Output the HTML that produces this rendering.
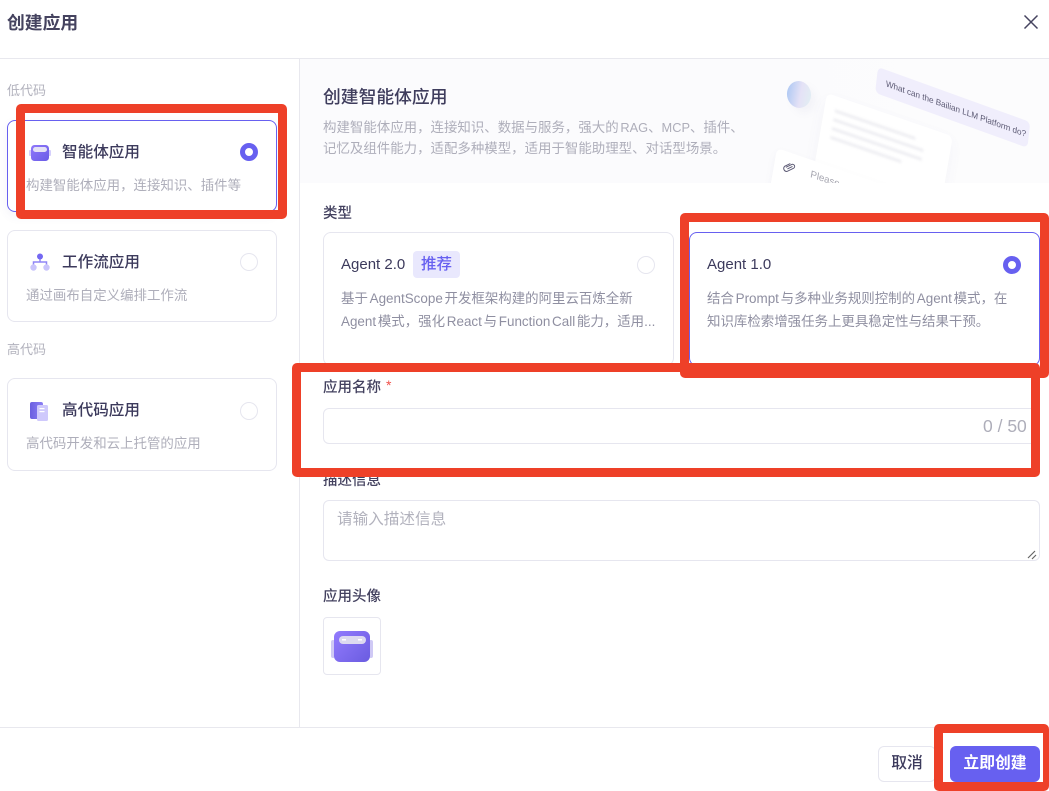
<!DOCTYPE html>
<html lang="zh-CN">
<head>
<meta charset="utf-8">
<title>创建应用</title>
<style>
html,body{margin:0;padding:0;background:#fff;}
body{width:1049px;height:791px;position:relative;overflow:hidden;font-family:"Liberation Sans","Noto Sans CJK SC",sans-serif;color:#3c3a5c;}
.a{position:absolute;box-sizing:border-box;white-space:nowrap;}
.card{position:absolute;box-sizing:border-box;background:#fff;border:1px solid #e6e6ef;border-radius:8px;}
.sel{border-color:#6760f0;}
.t{font-size:15.6px;line-height:22px;font-weight:500;color:#3c3a5c;}
.d{font-size:13.45px;line-height:20px;color:#aeaeba;word-spacing:-2px;}
.g{font-size:13px;line-height:20px;color:#b2b2bd;}
.lab{font-size:14.5px;line-height:20px;font-weight:500;color:#43415f;}
.r{position:absolute;box-sizing:border-box;width:18px;height:18px;border-radius:50%;border:1px solid #e6e6ef;background:#fff;}
.r.on{border:5.5px solid #6760f0;}
.red{position:absolute;box-sizing:border-box;border:9px solid #ee4028;border-radius:5px;}
.ln{position:absolute;height:3px;background:#eeeef2;filter:blur(1.4px);}
.ag{font-size:13.45px;line-height:23px;color:#8f8fa1;word-spacing:-2px;}
.sk{transform-origin:0 0;}
</style>
</head>
<body>
<div class="a" style="left:7px;top:11px;font-size:17.8px;line-height:24px;font-weight:700;color:#45435f;">创建应用</div>
<svg class="a" style="left:1023px;top:14px" width="16" height="16" viewBox="0 0 16 16"><path d="M1.5 1.5L14.5 14.5M14.5 1.5L1.5 14.5" stroke="#45435f" stroke-width="1.5" fill="none"/></svg>

<div class="a" style="left:0;top:58px;width:1049px;height:1px;background:#e8e8ee;"></div>
<div class="a" style="left:299px;top:58px;width:1px;height:669px;background:#e8e8ee;"></div>
<div class="a" style="left:0;top:727px;width:1049px;height:1px;background:#e8e8ee;"></div>

<!-- left -->
<div class="a g" style="left:7px;top:81px;">低代码</div>
<div class="card sel" style="left:7px;top:120px;width:270px;height:92px;box-shadow:0 4px 10px rgba(80,80,160,.07);"></div>
<svg class="a" style="left:29px;top:144px" width="22" height="18" viewBox="0 0 22 18"><defs><linearGradient id="g1" x1="0" y1="0" x2="1" y2="1"><stop offset="0" stop-color="#8f78fb"/><stop offset="1" stop-color="#6a5ce6"/></linearGradient></defs><rect x="0" y="6" width="3" height="6" rx="1" fill="#d5cffc"/><rect x="19" y="6" width="3" height="6" rx="1" fill="#d5cffc"/><rect x="2" y="1" width="18" height="16" rx="3.5" fill="url(#g1)"/><rect x="4" y="3" width="14" height="5" rx="2.5" fill="#e4e1f5"/></svg>
<div class="a t" style="left:62px;top:142px;">智能体应用</div>
<div class="r on" style="left:240px;top:143px;"></div>
<div class="a d" style="left:26px;top:176px;">构建智能体应用，连接知识、插件等</div>

<div class="card" style="left:7px;top:230px;width:270px;height:92px;"></div>
<svg class="a" style="left:30px;top:253px" width="20" height="19" viewBox="0 0 20 19"><path d="M10 6V9M3.5 12V9H16.5V12" stroke="#8f85f5" stroke-width="1.5" fill="none"/><circle cx="10" cy="3.5" r="3" fill="#7468f2"/><circle cx="3.5" cy="14.5" r="3.2" fill="#c9c4fb"/><circle cx="16.5" cy="14.5" r="3.2" fill="#c9c4fb"/></svg>
<div class="a t" style="left:62px;top:252px;">工作流应用</div>
<div class="r" style="left:240px;top:253px;"></div>
<div class="a d" style="left:26px;top:286px;">通过画布自定义编排工作流</div>

<div class="a g" style="left:7px;top:340px;">高代码</div>
<div class="card" style="left:7px;top:378px;width:270px;height:93px;"></div>
<svg class="a" style="left:30px;top:401px" width="18" height="20" viewBox="0 0 18 20"><defs><linearGradient id="g2" x1="0" y1="0" x2="1" y2="0"><stop offset="0" stop-color="#6a5fe0"/><stop offset="1" stop-color="#8d80f5"/></linearGradient></defs><rect x="0" y="1" width="13" height="17" rx="2" fill="url(#g2)"/><rect x="7" y="4" width="11" height="16" rx="1.5" fill="#cfc9fc"/><rect x="9.5" y="7" width="5" height="1.2" fill="#fff"/><rect x="9.5" y="10" width="5" height="1.2" fill="#fff"/></svg>
<div class="a t" style="left:62px;top:400px;">高代码应用</div>
<div class="r" style="left:240px;top:402px;"></div>
<div class="a d" style="left:26px;top:434px;">高代码开发和云上托管的应用</div>

<!-- banner -->
<div class="a" style="left:300px;top:59px;width:749px;height:124px;overflow:hidden;background:linear-gradient(90deg,#fbfbfd,#fbfbfd 60%,#fcfcfd);">
  <div class="a" style="left:487px;top:22px;width:24px;height:27px;border-radius:50%;background:linear-gradient(110deg,#a3c3f3,#e5e2f6 55%,#e1f1f3);transform:rotate(-10deg);box-shadow:4px 6px 8px rgba(120,120,170,.06);"></div>
  <div class="a sk" style="left:527px;top:34px;width:133px;height:75px;background:#fff;border-radius:6px;transform:matrix(.946,.326,-.17,.98,0,0);box-shadow:0 6px 14px rgba(100,100,150,.05);">
    <div class="ln" style="left:11px;top:13px;width:85px;"></div>
    <div class="ln" style="left:11px;top:22px;width:95px;"></div>
    <div class="ln" style="left:11px;top:31px;width:95px;"></div>
    <div class="ln" style="left:11px;top:40px;width:75px;"></div>
  </div>
  <div class="a sk" style="left:578px;top:8px;width:162px;height:26px;background:#f0eefc;border-radius:5px;transform:matrix(.94,.34,-.11,.99,0,0);font-size:8.6px;line-height:26px;padding-left:10px;color:#5d5b75;">What can the Bailian LLM Platform do?</div>
  <div class="a sk" style="left:477px;top:89px;width:200px;height:45px;background:#fff;border-radius:6px;transform:matrix(.946,.326,-.17,.98,0,0);box-shadow:0 3px 8px rgba(100,100,150,.06);font-size:10px;line-height:12px;color:#a6a6b0;padding:9px 0 0 38px;">Please</div>
  <svg class="a" style="left:483px;top:102px;transform:rotate(19deg)" width="13" height="13" viewBox="0 0 13 13"><path d="M3 7.5L7.5 3a2 2 0 0 1 3 3L5.5 11a3 3 0 0 1-4-4L6 2.5M5 8.5L9 4.5" stroke="#5d5b75" stroke-width="1" fill="none"/></svg>
</div>
<div class="a" style="left:323px;top:85px;font-size:17.8px;line-height:24px;font-weight:500;color:#3f3d5d;">创建智能体应用</div>
<div class="a d" style="left:323px;top:118px;line-height:20.5px;">构建智能体应用，连接知识、数据与服务，强大的 <span style="font-size:12.8px">RAG</span>、<span style="font-size:12.8px">MCP</span>、插件、<br>记忆及组件能力，适配多种模型，适用于智能助理型、对话型场景。</div>

<!-- type -->
<div class="a lab" style="left:323px;top:204px;">类型</div>
<div class="card" style="left:323px;top:232px;width:351px;height:134px;"></div>
<div class="a" style="left:341px;top:254px;font-size:15px;line-height:22px;color:#3c3a5c;">Agent 2.0</div>
<div class="a" style="left:413px;top:251px;width:47px;height:27px;background:#e9e8fd;border-radius:4px;color:#6760f0;font-size:15.5px;line-height:27px;text-align:center;font-weight:500;">推荐</div>
<div class="r" style="left:637px;top:256px;"></div>
<div class="a ag" style="left:341px;top:287px;">基于 AgentScope 开发框架构建的阿里云百炼全新<br>Agent 模式，强化 React 与 Function Call 能力，适用...</div>

<div class="card sel" style="left:689px;top:232px;width:351px;height:134px;"></div>
<div class="a" style="left:707px;top:254px;font-size:15px;line-height:22px;color:#3c3a5c;">Agent 1.0</div>
<div class="r on" style="left:1003px;top:256px;"></div>
<div class="a ag" style="left:707px;top:287px;">结合 Prompt 与多种业务规则控制的 Agent 模式，在<br>知识库检索增强任务上更具稳定性与结果干预。</div>

<!-- name -->
<div class="a lab" style="left:323px;top:378px;">应用名称</div>
<div class="a" style="left:386px;top:376px;color:#f0504a;font-size:14px;line-height:18px;">*</div>
<div class="card" style="left:323px;top:408px;width:717px;height:36px;border-radius:6px;"></div>
<div class="a" style="left:983px;top:416px;font-size:17.5px;line-height:20px;color:#aeaeba;">0 / 50</div>

<!-- desc -->
<div class="a lab" style="left:323px;top:471px;">描述信息</div>
<div class="card" style="left:323px;top:500px;width:717px;height:61px;border-radius:6px;"></div>
<div class="a" style="left:337px;top:510px;font-size:15.6px;line-height:20px;color:#b2b2bd;">请输入描述信息</div>
<svg class="a" style="left:1027px;top:550px" width="10" height="10" viewBox="0 0 10 10"><path d="M1 8L8 1M5 9L9 5" stroke="#666" stroke-width="1.2" fill="none"/></svg>

<!-- avatar -->
<div class="a lab" style="left:323px;top:587px;">应用头像</div>
<div class="card" style="left:323px;top:617px;width:58px;height:58px;border-radius:4px;"></div>
<svg class="a" style="left:331px;top:629px" width="42" height="36" viewBox="0 0 42 36"><defs><linearGradient id="g3" x1="0" y1="0.2" x2="1" y2="1"><stop offset="0" stop-color="#8f78fb"/><stop offset="1" stop-color="#6a5ce0"/></linearGradient></defs><rect x="0" y="11" width="4" height="18" rx="2" fill="#cfc9f5"/><rect x="38" y="11" width="4" height="18" rx="2" fill="#cfc9f5"/><rect x="3" y="2" width="36" height="31" rx="6" fill="url(#g3)"/><rect x="8" y="7" width="27" height="8" rx="4" fill="#dcd9f0"/><rect x="11" y="10" width="4" height="1.5" fill="#fff"/><rect x="27" y="10" width="4" height="1.5" fill="#fff"/></svg>

<!-- footer -->
<div class="a" style="left:878px;top:746px;width:58px;height:36px;border:1px solid #e6e6ef;border-radius:6px;background:#fff;font-size:15.8px;line-height:34px;text-align:center;color:#3c3a5c;font-weight:500;">取消</div>
<div class="a" style="left:950px;top:746px;width:90px;height:36px;border-radius:6px;background:#6760f0;font-size:15.8px;line-height:36px;text-align:center;color:#fff;font-weight:700;">立即创建</div>

<!-- annotations -->
<div class="red" style="left:16px;top:104px;width:271px;height:115px;"></div>
<div class="red" style="left:680px;top:213px;width:369px;height:165px;"></div>
<div class="red" style="left:292px;top:363px;width:748px;height:114px;"></div>
<div class="red" style="left:934px;top:724px;width:115px;height:67px;border-right-width:6px;"></div>
</body>
</html>
